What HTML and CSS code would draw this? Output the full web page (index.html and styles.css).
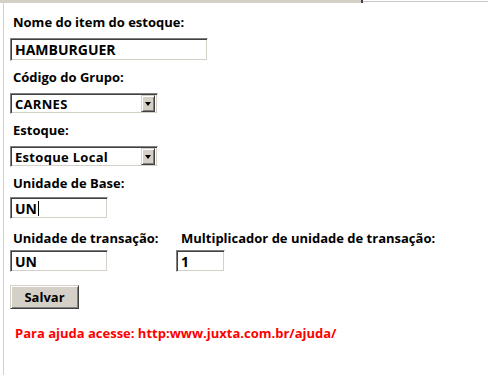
FILE: index.html
```html
<!DOCTYPE html>
<html lang="pt-BR">

<head>
    <meta charset="UTF-8">
    <title>Item do estoque</title>
    <link rel="stylesheet" href="styles.css">
</head>

<body>
    <div class="tabs">
        <div class="tab-active"></div>
        <div class="tab-rest"></div>
    </div>

    <div class="panel">
        <div class="field">
            <label for="nome">Nome do item do estoque:</label>
            <input type="text" id="nome" class="box w-large" value="HAMBURGUER">
        </div>

        <div class="field">
            <label>Código do Grupo:</label>
            <div class="box select">
                <span class="select-value">CARNES</span>
                <span class="select-btn"><i class="arrow"></i></span>
            </div>
        </div>

        <div class="field">
            <label>Estoque:</label>
            <div class="box select">
                <span class="select-value">Estoque Local</span>
                <span class="select-btn"><i class="arrow"></i></span>
            </div>
        </div>

        <div class="field field-base">
            <label for="base">Unidade de Base:</label>
            <div class="box w-small caret-box">UN<span class="caret"></span></div>
        </div>

        <div class="field-row">
            <div class="field col-first">
                <label for="transacao">Unidade de transação:</label>
                <input type="text" id="transacao" class="box w-small" value="UN">
            </div>
            <div class="field">
                <label for="mult" class="label-mult">Multiplicador de unidade de transação:</label>
                <input type="text" id="mult" class="box w-tiny" value="1">
            </div>
        </div>

        <button class="btn">Salvar</button>

        <p class="help">Para ajuda acesse: http:www.juxta.com.br/ajuda/</p>
    </div>
</body>

</html>
```

FILE: styles.css
```css
body {
    margin: 0;
    font-family: 'Open Sans', 'Liberation Sans', sans-serif;
    font-size: 13px;
    font-weight: bold;
    color: black;
    background-color: white;
}

.tabs {
    display: flex;
    align-items: flex-start;
    height: 3px;
}

.tab-active {
    width: 361px;
    height: 3px;
    background-color: #d4d0c8;
    border-right: 2px solid #404040;
}

.tab-rest {
    flex: 1;
    height: 1px;
    margin-top: 1px;
    background-color: #c8c8c8;
}

.panel {
    margin-left: 3px;
    border-left: 1px solid #d4d0c8;
    padding: 11px 0 40px 6px;
    min-height: 321px;
}

.field {
    display: flex;
    flex-direction: column;
    align-items: flex-start;
    margin-bottom: 8px;
}

.field label {
    display: block;
    line-height: 16px;
    padding-left: 3px;
    margin-bottom: 8px;
}

.box {
    box-sizing: border-box;
    height: 23px;
    margin: 0;
    padding: 0 4px;
    font: inherit;
    font-size: 14px;
    color: black;
    background-color: white;
    border-top: 1px solid #808080;
    border-left: 1px solid #808080;
    border-right: 1px solid #ffffff;
    border-bottom: 1px solid #ffffff;
    box-shadow: inset 1px 1px 0 #404040, inset -1px -1px 0 #d4d0c8;
    outline: none;
}

.w-large {
    width: 198px;
}

.w-small {
    width: 98px;
    height: 22px;
}

.w-tiny {
    width: 49px;
    height: 22px;
}

.select {
    display: flex;
    align-items: center;
    width: 148px;
    height: 21px;
    padding: 2px 2px 2px 4px;
    font-size: 13px;
}

.select-value {
    flex: 1;
    letter-spacing: 0.3px;
}

.select-btn {
    box-sizing: border-box;
    width: 14px;
    height: 17px;
    display: flex;
    align-items: center;
    justify-content: center;
    background-color: #d4d0c8;
    border-top: 1px solid #d4d0c8;
    border-left: 1px solid #d4d0c8;
    border-right: 1px solid #404040;
    border-bottom: 1px solid #404040;
    box-shadow: inset 1px 1px 0 #ffffff, inset -1px -1px 0 #808080;
}

.arrow {
    width: 0;
    height: 0;
    border-left: 3px solid transparent;
    border-right: 3px solid transparent;
    border-top: 4px solid black;
    margin-top: 1px;
}

.caret-box {
    display: flex;
    align-items: center;
}

.caret {
    width: 1px;
    height: 15px;
    background-color: black;
    margin-left: 1px;
}

.field-base {
    margin-bottom: 11px;
}

.field-base label {
    margin-bottom: 6px;
}

.field-row {
    display: flex;
}

.field-row label {
    margin-bottom: 4px;
}

.col-first {
    width: 166px;
}

.label-mult {
    padding-left: 5px !important;
}

.btn {
    display: block;
    width: 69px;
    height: 24px;
    margin-top: 5px;
    padding: 0;
    font: inherit;
    color: black;
    background-color: #d4d0c8;
    border-top: 1px solid #d4d0c8;
    border-left: 1px solid #d4d0c8;
    border-right: 1px solid #404040;
    border-bottom: 1px solid #404040;
    box-shadow: inset 1px 1px 0 #ffffff, inset -1px -1px 0 #808080;
}

.help {
    margin: 16px 0 0 5px;
    line-height: 16px;
    color: #ff0000;
}
```
